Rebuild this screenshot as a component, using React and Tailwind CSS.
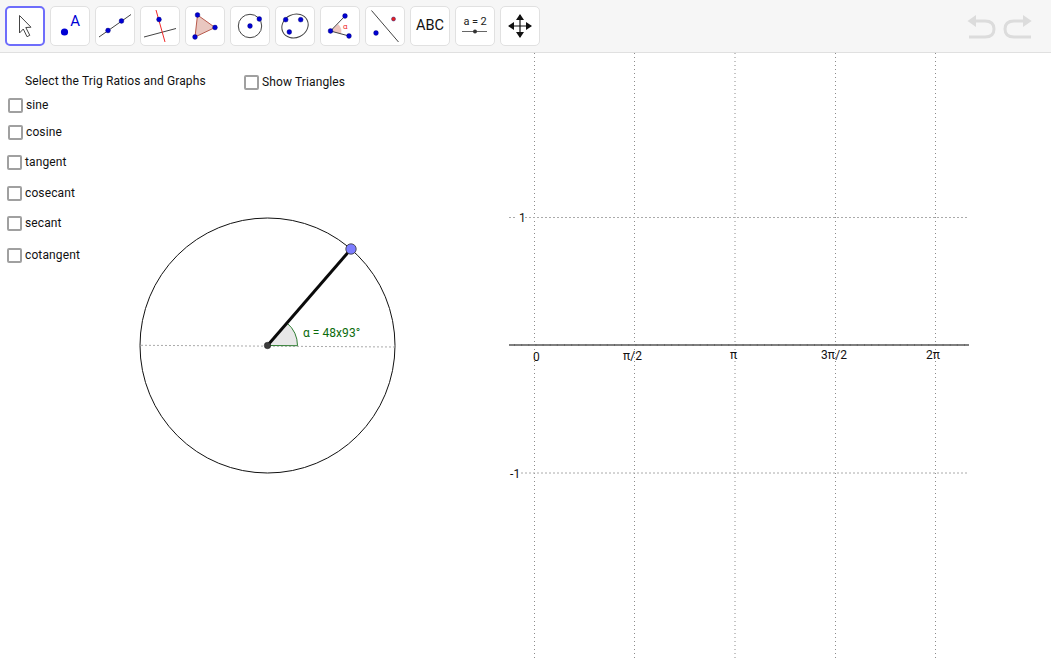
import React from "react";

const BLUE = "#0000d4";
const Dot = ({ x, y, r = 2.4, c = BLUE }) => <circle cx={x} cy={y} r={r} fill={c} stroke="#00006a" strokeWidth="0.4" />;

function ToolBtn({ active, children }) {
  return (
    <button
      className={
        active
          ? "w-10 h-10 shrink-0 rounded-[5px] bg-white border-2 border-[#6e6dfb] relative flex items-center justify-center"
          : "w-10 h-10 shrink-0 rounded-[5px] bg-white border border-[#e1e1e1] relative flex items-center justify-center"
      }
    >
      {children}
    </button>
  );
}

const Ico = ({ children }) => (
  <svg viewBox="0 0 40 40" className="w-10 h-10 shrink-0">
    {children}
  </svg>
);

const icons = [
  <Ico key="a">
    <path d="M14.5 9.5 L26 21.2 L20.8 21.5 L24.8 29.3 L22 30.7 L18.3 23 L14.5 27 Z" fill="#fff" stroke="#444" strokeWidth="1" />
  </Ico>,
  <Ico key="b">
    <circle cx="14.5" cy="26" r="3.6" fill={BLUE} />
    <text x="20.3" y="20" fontSize="15" fill={BLUE} fontFamily="Roboto, sans-serif">A</text>
  </Ico>,
  <Ico key="c">
    <line x1="4" y1="31" x2="36" y2="8.5" stroke="#444" strokeWidth="1" />
    <Dot x="13" y="24.5" />
    <Dot x="26.5" y="15" />
  </Ico>,
  <Ico key="d">
    <line x1="4" y1="31" x2="36" y2="22.5" stroke="#444" strokeWidth="1" />
    <line x1="16" y1="4" x2="25" y2="36" stroke="#f02828" strokeWidth="1" />
    <Dot x="19" y="13.5" />
  </Ico>,
  <Ico key="e">
    <path d="M12.5 9 L30 21.5 L10 31 Z" fill="#e9c7c0" stroke="#b85a4c" strokeWidth="1" />
    <Dot x="12.5" y="9" />
    <Dot x="30" y="21.5" />
    <Dot x="10" y="31" />
  </Ico>,
  <Ico key="f">
    <circle cx="20" cy="20" r="11.7" fill="none" stroke="#444" strokeWidth="1" />
    <Dot x="20" y="20" />
    <Dot x="29.3" y="13" />
  </Ico>,
  <Ico key="g">
    <ellipse cx="20" cy="20" rx="13.5" ry="11.5" transform="rotate(-25 20 20)" fill="none" stroke="#444" strokeWidth="1" />
    <Dot x="10.7" y="13.7" />
    <Dot x="25.7" y="13.7" />
    <Dot x="14.3" y="26" />
  </Ico>,
  <Ico key="h">
    <path d="M10.5 25 L18 18 A10 10 0 0 1 21 28 Z" fill="#eec6bf" />
    <line x1="10.5" y1="25" x2="25" y2="10" stroke="#444" strokeWidth="1" />
    <line x1="10.5" y1="25" x2="29" y2="30" stroke="#444" strokeWidth="1" />
    <Dot x="25" y="10" />
    <Dot x="10.5" y="25" />
    <Dot x="29" y="30" />
    <text x="23" y="23" fontSize="8" fill="#f03030" fontFamily="Roboto, sans-serif">α</text>
  </Ico>,
  <Ico key="i">
    <line x1="6.5" y1="4.5" x2="33.5" y2="36" stroke="#444" strokeWidth="1" />
    <Dot x="11" y="27" />
    <Dot x="28.5" y="13" r="2" c="#e82020" />
  </Ico>,
  <span key="j" className="text-[14.5px] text-[#111] leading-none">ABC</span>,
  <Ico key="k">
    <text x="20" y="18.5" fontSize="11" textAnchor="middle" fill="#222" fontFamily="Roboto, sans-serif" letterSpacing="-0.1">a = 2</text>
    <line x1="7" y1="25.5" x2="32" y2="25.5" stroke="#666" strokeWidth="1" />
    <circle cx="20" cy="25.5" r="2" fill="#333" />
  </Ico>,
  <Ico key="l">
    <path d="M20 9 V31 M9 20 H31" stroke="#111" strokeWidth="1.2" />
    <path d="M20 8 L16 14 H24 Z M20 32 L16 26 H24 Z M8 20 L14 16 V24 Z M32 20 L26 16 V24 Z" fill="#111" />
  </Ico>,
];

const rows = [
  { label: "sine", pad: "pl-[1px]" },
  { label: "cosine", pad: "pl-[1px]" },
  { label: "tangent", pad: "" },
  { label: "cosecant", pad: "" },
  { label: "secant", pad: "" },
  { label: "cotangent", pad: "" },
];

const Box = () => (
  <span className="block shrink-0 w-[15px] h-[15px] border-2 border-[#a0a0a0] rounded-[2px] bg-white" />
);

const T = ({ className = "", children }) => (
  <span className={"block whitespace-nowrap text-[12px] leading-[14px] tracking-[0.12px] text-[#111] " + className}>{children}</span>
);

const gridX = [534.5, 634.5, 735, 835.5, 935.5];
const ticks = [];
for (let x = 514.5; x < 968; x += 100 / 14) ticks.push(x);

export default function App() {
  return (
    <div className="w-[1053px] h-[664px] bg-white overflow-hidden flex flex-col font-['Roboto',sans-serif]">
      <div className="h-[53px] w-[1051px] shrink-0 bg-[#f6f6f6] border-b border-[#e0e0e0] flex items-start pt-[6px] pl-[5px] gap-[5px]">
        {icons.map((ic, i) => (
          <ToolBtn key={i} active={i === 0}>{ic}</ToolBtn>
        ))}
        <svg viewBox="0 0 70 26" className="ml-auto mr-[14px] mt-[8px] w-[70px] h-[26px]" fill="none">
          <g stroke="#dcdcdc" strokeWidth="3">
            <path d="M8 7 H18 Q27 7 27 15 Q27 23 18 23 H2" />
            <path d="M64 23 H47 Q38 23 38 15 Q38 7 47 7 H57" />
          </g>
          <path d="M0.5 7 L9 1 V13 Z M64.7 7 L56 1 V13 Z" fill="#dcdcdc" />
        </svg>
      </div>

      <div className="relative flex-1">
        <svg viewBox="0 53 1053 611" className="absolute left-0 top-0 w-[1053px] h-[611px]" fill="none">
          {gridX.map((x) => (
            <line key={x} x1={x} y1="53" x2={x} y2="660" stroke="#8c8c8c" strokeWidth="1" strokeDasharray="1 3" />
          ))}
          <path d="M509 217.5 H517 M525 217.5 H968" stroke="#aaa" strokeWidth="1" strokeDasharray="2 2" />
          <path d="M521 473 H968" stroke="#aaa" strokeWidth="1" strokeDasharray="2 2" />
          <line x1="509" y1="345" x2="969" y2="345" stroke="#808080" strokeWidth="2" />
          {ticks.map((x) => (
            <line key={x} x1={x} y1="344" x2={x} y2="346" stroke="#555" strokeWidth="0.6" />
          ))}

          <circle cx="267.5" cy="345.5" r="127.5" stroke="#111" strokeWidth="1" />
          <line x1="141" y1="345.3" x2="395" y2="347" stroke="#aaa" strokeWidth="1" strokeDasharray="2 2" />
          <path d="M267.5 345.5 L287 323 A30 30 0 0 1 297.5 345.7 Z" fill="#e8e8e8" stroke="#2f7d32" strokeWidth="1" />
          <line x1="267.5" y1="345.5" x2="351" y2="249" stroke="#0a0a0a" strokeWidth="3" />
          <circle cx="267.5" cy="345.5" r="3.2" fill="#3c3c3c" stroke="#222" strokeWidth="0.6" />
          <circle cx="351" cy="249" r="5.2" fill="#7d7dff" stroke="#333" strokeWidth="0.8" />
        </svg>

        <div className="relative flex flex-col pt-[21px] pl-[7px] w-[480px]">
          <div className="flex items-start h-[24px]">
            <div className="w-[237px] pl-[18px]"><T>Select the Trig Ratios and Graphs</T></div>
            <div className="flex items-start gap-[3px] pt-[1px]"><Box /><T>Show Triangles</T></div>
          </div>
          <div className="grid grid-rows-[27px_30px_31px_30px_32px_15px] justify-start">
            {rows.map((r) => (
              <div key={r.label} className={"flex items-start gap-[3px] " + r.pad}>
                <Box />
                <T>{r.label}</T>
              </div>
            ))}
          </div>
        </div>

        <T className="absolute left-[303px] top-[273px] !text-[#0b6b0b] !tracking-[0.05px]">α = 48x93°</T>

        <T className="absolute left-[519px] top-[158px]">1</T>
        <T className="absolute left-[510px] top-[414px]">-1</T>
        <T className="absolute left-[533px] top-[297px]">0</T>
        <T className="absolute left-[623px] top-[296px]">π/2</T>
        <T className="absolute left-[730px] top-[295px]">π</T>
        <T className="absolute left-[821px] top-[295px]">3π/2</T>
        <T className="absolute left-[926px] top-[295px]">2π</T>
      </div>
    </div>
  );
}
